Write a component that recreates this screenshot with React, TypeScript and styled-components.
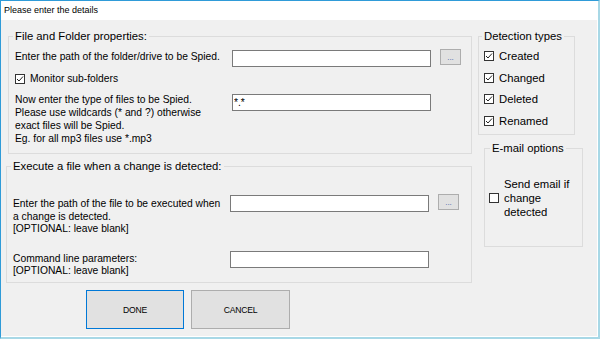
import styled, { createGlobalStyle } from "styled-components";

const GlobalStyle = createGlobalStyle`
  html, body {
    margin: 0;
    padding: 0;
    background: #f0f0f0;
  }
  body {
    font-family: "Liberation Sans", Arial, sans-serif;
    color: #000;
  }
  * {
    box-sizing: border-box;
  }
`;

const Window = styled.div`
  width: 600px;
  height: 339px;
  display: flex;
  flex-direction: column;
  background: #f0f0f0;
  border-left: 1px solid #2f9bd8;
  border-top: 1px solid #2f9bd8;
  border-right: 2px solid #a8d8e6;
  border-bottom: 2px solid #a8d8e6;
  overflow: hidden;
`;

const TitleBar = styled.div`
  flex: none;
  height: 19px;
  padding-left: 3px;
  background: #fff;
  font-size: 9px;
  line-height: 19px;
`;

const Body = styled.div`
  flex: 1;
  display: flex;
  align-items: flex-start;
  padding: 10px 0 0 5px;
  border-right: 1px solid #fff;
  border-bottom: 1px solid #fff;
`;

const LeftColumn = styled.div`
  width: 466px;
  display: flex;
  flex-direction: column;
`;

const RightColumn = styled.div`
  margin-left: 6px;
  display: flex;
  flex-direction: column;
`;

const GroupBox = styled.fieldset<{
  $width: number;
  $left?: number;
  $top?: number;
  $pad: string;
}>`
  width: ${(p) => p.$width}px;
  min-width: 0;
  margin: ${(p) => p.$top ?? 0}px 0 0 ${(p) => p.$left ?? 0}px;
  padding: ${(p) => p.$pad};
  border: 1px solid #dcdcdc;
`;

const Legend = styled.legend<{ $shift?: number }>`
  margin-left: ${(p) => p.$shift ?? -2}px;
  padding: 0 2px;
  font-size: 11.3px;
  line-height: 13px;
`;

const FieldRow = styled.div<{ $top?: number }>`
  display: flex;
  align-items: flex-start;
  margin-top: ${(p) => p.$top ?? 0}px;
`;

const Label = styled.div<{ $top?: number }>`
  width: 217px;
  flex: none;
  margin-top: ${(p) => p.$top ?? 0}px;
  font-size: 10.3px;
  line-height: 12.7px;
`;

const TextBox = styled.input`
  width: 199px;
  height: 17px;
  flex: none;
  margin: 0;
  padding: 0 1px;
  border: 1px solid #7a7a7a;
  background: #fff;
  font-family: inherit;
  font-size: 10.3px;
  outline: none;
`;

const BrowseButton = styled.button`
  width: 21px;
  height: 16px;
  flex: none;
  margin: -1px 0 0 9px;
  padding: 0 0 2px;
  display: flex;
  align-items: flex-end;
  justify-content: center;
  border: 1px solid #adadad;
  background: #e1e1e1;
  font-family: inherit;
  font-size: 8px;
  line-height: 1;
  color: #3a5fa8;
`;

const CheckRow = styled.label<{ $height: number; $size: number; $top?: number }>`
  display: flex;
  align-items: center;
  gap: 5px;
  height: ${(p) => p.$height}px;
  margin-top: ${(p) => p.$top ?? 0}px;
  font-size: ${(p) => p.$size}px;
  line-height: 14.2px;
`;

const Box = styled.span`
  width: 10px;
  height: 10px;
  flex: none;
  display: flex;
  border: 1px solid #333;
  background: #fff;
`;

const ButtonRow = styled.div`
  display: flex;
  gap: 7px;
  margin: 7px 0 0 80px;
`;

const DialogButton = styled.button<{ $primary?: boolean; $width: number }>`
  width: ${(p) => p.$width}px;
  height: 39px;
  padding: 0;
  border: 1px solid ${(p) => (p.$primary ? "#0078d7" : "#adadad")};
  background: #e1e1e1;
  font-family: inherit;
  font-size: 8.6px;
  letter-spacing: -0.2px;
  color: #000;
`;

function CheckBox({ checked }: { checked?: boolean }) {
  return (
    <Box>
      {checked && (
        <svg width="8" height="8" viewBox="0 0 8 8">
          <polyline
            points="1,4 3,6 7,1.5"
            fill="none"
            stroke="#222"
            strokeWidth="1"
          />
        </svg>
      )}
    </Box>
  );
}

const detectionTypes = ["Created", "Changed", "Deleted", "Renamed"];

export default function App() {
  return (
    <>
      <GlobalStyle />
      <Window>
        <TitleBar>Please enter the details</TitleBar>
        <Body>
          <LeftColumn>
            <GroupBox $width={464} $left={2} $pad="7px 0 8px 6px">
              <Legend>File and Folder properties:</Legend>
              <FieldRow>
                <Label $top={0.6}>
                  Enter the path of the folder/drive to be Spied.
                </Label>
                <TextBox />
                <BrowseButton>...</BrowseButton>
              </FieldRow>
              <CheckRow $height={12} $size={10.3} $top={6}>
                <CheckBox checked />
                Monitor sub-folders
              </CheckRow>
              <FieldRow $top={9.4}>
                <Label>
                  Now enter the type of files to be Spied.
                  <br />
                  Please use wildcards (* and ?) otherwise
                  <br />
                  exact files will be Spied.
                  <br />
                  Eg. for all mp3 files use *.mp3
                </Label>
                <TextBox defaultValue="*.*" />
              </FieldRow>
            </GroupBox>

            <GroupBox $width={466} $top={5.8} $pad="22px 0 4px 6px">
              <Legend>Execute a file when a change is detected:</Legend>
              <FieldRow>
                <Label $top={3}>
                  Enter the path of the file to be executed when
                  <br />
                  a change is detected.
                  <br />
                  [OPTIONAL: leave blank]
                </Label>
                <TextBox />
                <BrowseButton>...</BrowseButton>
              </FieldRow>
              <FieldRow $top={15.3}>
                <Label $top={1.3}>
                  Command line parameters:
                  <br />
                  [OPTIONAL: leave blank]
                </Label>
                <TextBox />
              </FieldRow>
            </GroupBox>

            <ButtonRow>
              <DialogButton $primary $width={98}>
                DONE
              </DialogButton>
              <DialogButton $width={99}>CANCEL</DialogButton>
            </ButtonRow>
          </LeftColumn>

          <RightColumn>
            <GroupBox $width={97} $pad="2px 0 2px 5px">
              <Legend>Detection types</Legend>
              {detectionTypes.map((name) => (
                <CheckRow key={name} $height={21.8} $size={11.3}>
                  <CheckBox checked />
                  {name}
                </CheckRow>
              ))}
            </GroupBox>

            <GroupBox $width={99} $left={6} $top={6.5} $pad="22px 0 27px 4px">
              <Legend $shift={1}>E-mail options</Legend>
              <CheckRow $height={42.6} $size={11.3}>
                <CheckBox />
                <span>
                  Send email if
                  <br />
                  change
                  <br />
                  detected
                </span>
              </CheckRow>
            </GroupBox>
          </RightColumn>
        </Body>
      </Window>
    </>
  );
}
